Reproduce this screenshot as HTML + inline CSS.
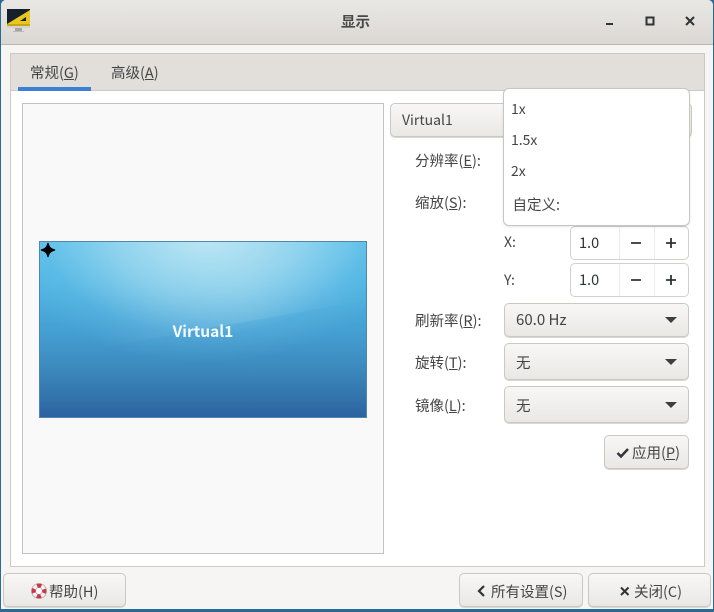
<!DOCTYPE html>
<html><head><meta charset="utf-8">
<style>
html,body{margin:0;padding:0;width:714px;height:612px;overflow:hidden;background:#2a6a94;}
*{box-sizing:border-box;}
body{font-family:"Noto Sans CJK SC","Liberation Sans",sans-serif;font-size:14.5px;color:#444;position:relative;}
.a{position:absolute;white-space:nowrap;}
.t{line-height:20px;height:20px;}
#win{left:1px;top:0;width:712px;height:609px;background:#f6f5f4;border-radius:5px 5px 0 0;overflow:hidden;}
.btn{position:absolute;border:1px solid #cbc8c3;border-radius:5px;background:linear-gradient(#f8f7f6,#eae8e5);box-shadow:0 1px 0 #dad7d3;}
.arrow{position:absolute;width:0;height:0;border-left:6px solid transparent;border-right:6px solid transparent;border-top:6px solid #3a3f41;}
.spin{position:absolute;left:570px;width:119px;height:34px;border:1px solid #d3d0cc;border-radius:5px;background:#fff;}
.spin i{position:absolute;top:0;width:1px;height:32px;background:#eeecea;}
</style></head><body>
<div class="a" id="win"></div>

<!-- titlebar -->
<div class="a" style="left:1px;top:0;width:712px;height:45px;background:linear-gradient(#e9e7e4,#dbd8d4);border-bottom:1px solid #b9b5b0;border-radius:5px 5px 0 0;"></div>
<svg class="a" style="left:7px;top:9px" width="24" height="24" viewBox="0 0 24 24">
<rect x="0" y="0" width="23" height="16" fill="#16202a"/>
<path d="M0 15 L23 1 V16H0Z" fill="#e8c820"/>
<path d="M13 12 L19 8 V12Z" fill="#16202a"/>
<rect x="0" y="15" width="23" height="2" fill="#c9a810"/>
<rect x="0" y="17" width="23" height="2" fill="#d5d3d0"/>
<rect x="8" y="19" width="7" height="3" fill="#a3a5a8"/>
<rect x="6" y="22" width="11" height="1" fill="#b9bbbd"/>
</svg>
<div class="a t" style="left:341px;top:12px;font-weight:700;color:#484848;font-size:14.5px;">显示</div>
<svg class="a" style="left:600px;top:12px" width="100" height="18" viewBox="0 0 100 18">
<rect x="6" y="11" width="7" height="2" fill="#2e3436"/>
<rect x="46.5" y="5.5" width="7" height="7" fill="none" stroke="#2e3436" stroke-width="2"/>
<path d="M86 5 L94 13 M94 5 L86 13" stroke="#2e3436" stroke-width="2"/>
</svg>

<!-- notebook -->
<div class="a" style="left:10px;top:53px;width:695px;height:514px;background:#fff;border:1px solid #cdc9c5;"></div>
<div class="a" style="left:11px;top:54px;width:693px;height:37px;background:#e2dfdb;border-bottom:1px solid #cdc9c5;"></div>
<div class="a" style="left:18px;top:87px;width:73px;height:4px;background:#3c80d6;"></div>
<div class="a t" style="left:30px;top:63px;"><span>常规(<u>G</u>)</span></div>
<div class="a t" style="left:111px;top:63px;"><span>高级(<u>A</u>)</span></div>

<!-- preview -->
<div class="a" style="left:22px;top:103px;width:362px;height:451px;background:#f9f9f9;border:1px solid #c4c2bf;"></div>
<div class="a" style="left:39px;top:241px;width:328px;height:177px;border:1px solid #4f86ad;overflow:hidden;background:linear-gradient(#5dc0ea 0%,#4fb4e2 25%,#45a0d3 50%,#3d8cc0 70%,#3272ab 90%,#2d62a0 100%);">
  <div style="position:absolute;left:-40px;top:-130px;width:410px;height:250px;background:radial-gradient(closest-side,rgba(200,235,245,.85) 0%,rgba(170,222,240,.62) 45%,rgba(120,200,235,.22) 78%,rgba(90,190,235,0) 100%);"></div>
  <svg style="position:absolute;left:0;top:0" width="326" height="175"><defs><linearGradient id="w" x1="0" x2="1" y1="0" y2="0"><stop offset="0" stop-color="#fff" stop-opacity="0"/><stop offset=".55" stop-color="#fff" stop-opacity=".09"/><stop offset=".85" stop-color="#fff" stop-opacity=".03"/><stop offset="1" stop-color="#fff" stop-opacity="0"/></linearGradient></defs><path d="M60 106 L326 58 V0 H60Z" fill="url(#w)"/></svg>
</div>
<svg class="a" style="left:40px;top:242px" width="16" height="16" viewBox="0 0 16 16"><path d="M8 1 C8.8 5 10.5 7 15 8 C10.5 9 8.8 11 8 15 C7.2 11 5.5 9 1 8 C5.5 7 7.2 5 8 1Z" fill="#000" stroke="#000" stroke-width="1.2"/></svg>
<div class="a t" style="left:39px;width:328px;top:321px;text-align:center;color:#f4fbff;font-weight:700;font-size:15.5px;">Virtual1</div>

<!-- monitor combo -->
<div class="btn" style="left:390px;top:103px;width:302px;height:34px;"></div>
<div class="a t" style="left:402px;top:110px;font-size:14px;">Virtual1</div>

<!-- labels -->
<div class="a t" style="left:415px;top:151px;">分辨率(<u>E</u>):</div>
<div class="a t" style="left:415px;top:193px;">缩放(<u>S</u>):</div>
<div class="a t" style="left:415px;top:311px;">刷新率(<u>R</u>):</div>
<div class="a t" style="left:415px;top:353px;">旋转(<u>T</u>):</div>
<div class="a t" style="left:415px;top:396px;">镜像(<u>L</u>):</div>
<div class="a t" style="left:504px;top:232px;font-size:14px;">X:</div>
<div class="a t" style="left:504px;top:270px;font-size:14px;">Y:</div>

<!-- spins -->
<div class="spin" style="top:226px;"><i style="left:48px"></i><i style="left:83px"></i></div>
<div class="a t" style="left:579px;top:233px;color:#2e3436;font-size:14.5px;">1.0</div>
<svg class="a" style="left:620px;top:233px" width="60" height="20"><path d="M11 10 H21 M46 10 H56 M51 5 V15" stroke="#2e3436" stroke-width="1.8"/></svg>
<div class="spin" style="top:263px;"><i style="left:48px"></i><i style="left:83px"></i></div>
<div class="a t" style="left:579px;top:270px;color:#2e3436;font-size:14.5px;">1.0</div>
<svg class="a" style="left:620px;top:270px" width="60" height="20"><path d="M11 10 H21 M46 10 H56 M51 5 V15" stroke="#2e3436" stroke-width="1.8"/></svg>

<!-- combos -->
<div class="btn" style="left:504px;top:303px;width:185px;height:34px;"></div>
<div class="a t" style="left:516px;top:310px;font-size:15px;">60.0 Hz</div>
<div class="arrow" style="left:665px;top:317px;"></div>
<div class="btn" style="left:504px;top:343px;width:185px;height:37px;"></div>
<div class="a t" style="left:516px;top:353px;">无</div>
<div class="arrow" style="left:665px;top:359px;"></div>
<div class="btn" style="left:504px;top:386px;width:185px;height:37px;"></div>
<div class="a t" style="left:516px;top:396px;">无</div>
<div class="arrow" style="left:665px;top:402px;"></div>

<!-- apply -->
<div class="btn" style="left:604px;top:435px;width:85px;height:34px;"></div>
<svg class="a" style="left:616px;top:447px" width="14" height="12" viewBox="0 0 14 12"><path d="M1.5 6 L5 9.5 L12 2" fill="none" stroke="#2e3436" stroke-width="2.4"/></svg>
<div class="a t" style="left:632px;top:443px;">应用(<u>P</u>)</div>

<!-- popup -->
<div class="a" style="left:503px;top:88px;width:187px;height:138px;background:#fff;border:1px solid #c9c6c2;border-radius:6px;box-shadow:0 1px 2px rgba(0,0,0,.1);"></div>
<div class="a t" style="left:511px;top:99px;font-size:14px;">1x</div>
<div class="a t" style="left:511px;top:130px;font-size:14px;">1.5x</div>
<div class="a t" style="left:511px;top:161px;font-size:14px;">2x</div>
<div class="a t" style="left:512.5px;top:195px;">自定义:</div>

<!-- bottom buttons -->
<div class="btn" style="left:3px;top:573px;width:123px;height:34px;"></div>
<svg class="a" style="left:31px;top:583px" width="16" height="16" viewBox="0 0 16 16">
<circle cx="8" cy="8" r="5.5" fill="none" stroke="#f3f0ef" stroke-width="4"/>
<circle cx="8" cy="8" r="5.5" fill="none" stroke="#c9374a" stroke-width="4" stroke-dasharray="4.3 4.34" stroke-dashoffset="2.1"/>
<circle cx="8" cy="8" r="7.5" fill="none" stroke="#a8888c" stroke-width=".6"/>
<circle cx="8" cy="8" r="3.4" fill="#fff" stroke="#b56" stroke-width=".5"/>
</svg>
<div class="a t" style="left:49px;top:582px;">帮助(H)</div>

<div class="btn" style="left:459px;top:573px;width:124px;height:34px;"></div>
<svg class="a" style="left:476px;top:584px" width="10" height="14" viewBox="0 0 10 14"><path d="M8 2 L3 7 L8 12" fill="none" stroke="#2e3436" stroke-width="2.2"/></svg>
<div class="a t" style="left:491px;top:582px;">所有设置(S)</div>

<div class="btn" style="left:588px;top:573px;width:123px;height:34px;"></div>
<svg class="a" style="left:619px;top:585px" width="12" height="12" viewBox="0 0 12 12"><path d="M2 2.5 L9.5 10 M9.5 2.5 L2 10" fill="none" stroke="#2e3436" stroke-width="2"/></svg>
<div class="a t" style="left:634px;top:582px;">关闭(C)</div>
</body></html>
